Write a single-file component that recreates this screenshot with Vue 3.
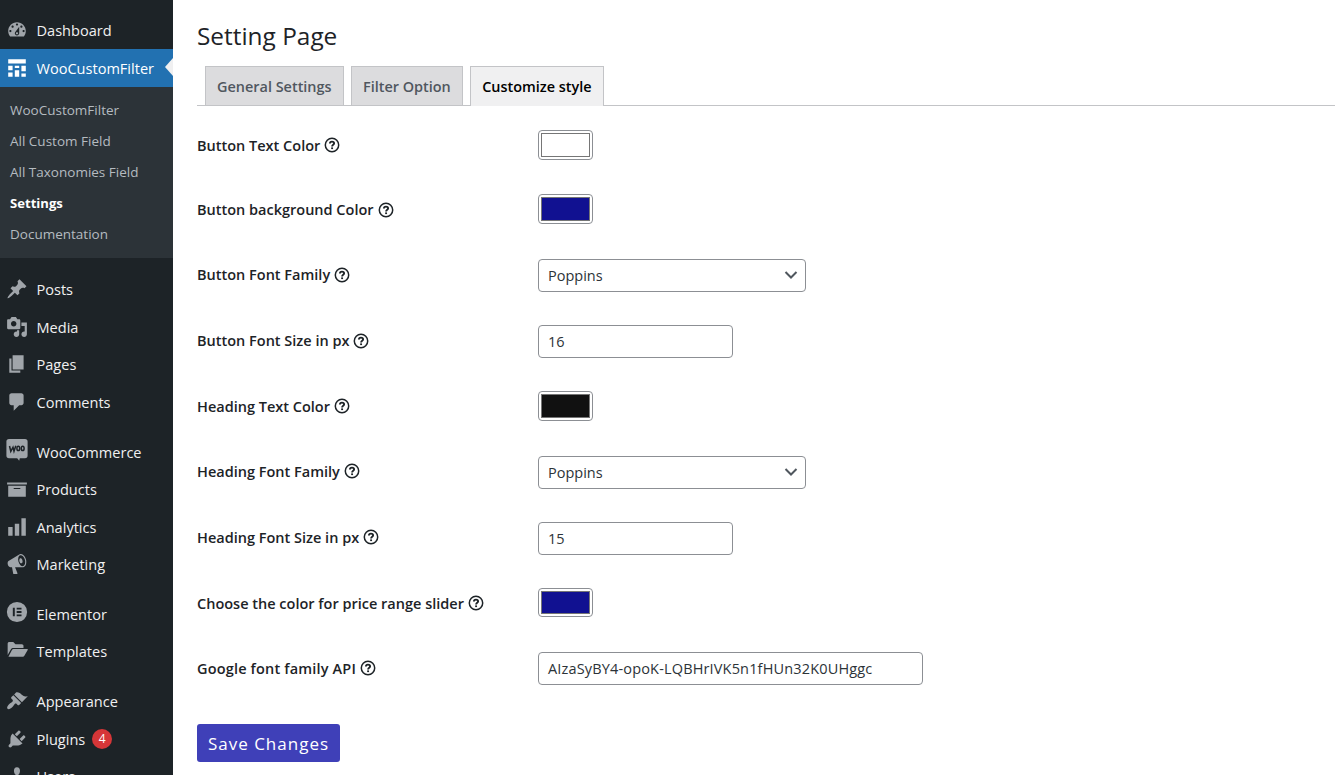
<script setup>
const icons = {
  dashboard: 'M3.76 16h12.48c1.1-1.37 1.76-3.11 1.76-5 0-4.42-3.58-8-8-8s-8 3.58-8 8c0 1.89.66 3.63 1.76 5zM10 4c.55 0 1 .45 1 1s-.45 1-1 1-1-.45-1-1 .45-1 1-1zM6 6c.55 0 1 .45 1 1s-.45 1-1 1-1-.45-1-1 .45-1 1-1zm8 0c.55 0 1 .45 1 1s-.45 1-1 1-1-.45-1-1 .45-1 1-1zm-5.37 5.55L12 7v6c0 1.1-.9 2-2 2s-2-.9-2-2c0-.57.24-1.08.63-1.45zM4 10c.55 0 1 .45 1 1s-.45 1-1 1-1-.45-1-1 .45-1 1-1zm12 0c.55 0 1 .45 1 1s-.45 1-1 1-1-.45-1-1 .45-1 1-1zm-5 3c0-.55-.45-1-1-1s-1 .45-1 1 .45 1 1 1 1-.45 1-1z',
  layout: 'M2 2h16v4H2V2zm0 10V8h4v4H2zm6-2V8h4v2H8zm6 3V8h4v5h-4zm-6 5v-6h4v6H8zm-6 0v-4h4v4H2zm12 0v-3h4v3h-4z',
  posts: 'M10.44 3.02l1.82-1.82 6.36 6.35-1.83 1.82c-1.05-.68-2.48-.57-3.41.36l-.75.75c-.92.93-1.04 2.35-.35 3.41l-1.83 1.82-2.41-2.41-2.8 2.79c-.42.42-3.38 2.71-3.8 2.29s1.86-3.39 2.28-3.81l2.79-2.79L4.1 9.36l1.83-1.82c1.05.69 2.48.57 3.4-.36l.75-.75c.93-.92 1.05-2.35.36-3.41z',
  media: 'M13 11V4c0-.55-.45-1-1-1h-1.67L9 1H5L3.67 3H2c-.55 0-1 .45-1 1v7c0 .55.45 1 1 1h10c.55 0 1-.45 1-1zM7 4.5c1.38 0 2.5 1.12 2.5 2.5S8.38 9.5 7 9.5 4.5 8.38 4.5 7 5.62 4.5 7 4.5zM14 6h5v10.5c0 1.38-1.12 2.5-2.5 2.5S14 17.88 14 16.5s1.12-2.5 2.5-2.5c.17 0 .34.02.5.05V9h-3V6zm-4 8.05V13h2v3.5c0 1.38-1.12 2.5-2.5 2.5S7 17.88 7 16.5 8.12 14 9.5 14c.17 0 .34.02.5.05z',
  pages: 'M6 15V2h10v13H6zm-1 1h8v2H3V5h2v11z',
  comments: 'M5 2h9c1.1 0 2 .9 2 2v7c0 1.1-.9 2-2 2h-2l-5 5v-5H5c-1.1 0-2-.9-2-2V4c0-1.1.9-2 2-2z',
  products: 'M19 4v2H1V4h18zM2 7h16v10H2V7zm11 3V9H7v1h6z',
  analytics: 'M18 18V2h-4v16h4zm-6 0V7H8v11h4zm-6 0v-8H2v8h4z',
  marketing: 'M18.15 5.94c.46 1.62.38 3.22-.02 4.48-.42 1.28-1.26 2.18-2.3 2.48-.16.06-.26.06-.4.06-.06.02-.12.02-.18.02-.06.02-.14.02-.22.02h-6.8l2.22 5.5c.02.14-.06.26-.14.34-.08.1-.24.16-.34.16H6.95c-.1 0-.26-.06-.34-.16-.08-.08-.16-.2-.14-.34l-1-5.5H4.25l-.02-.02c-.5.06-1.08-.18-1.54-.62s-.88-1.08-1.06-1.88c-.24-.8-.2-1.56-.02-2.2.18-.62.58-1.08 1.06-1.3l.02-.02 9-5.4c.1-.06.18-.1.24-.16.06-.04.14-.08.24-.12.16-.08.28-.12.5-.18 1.04-.3 2.24.1 3.22.98s1.84 2.24 2.26 3.86zm-2.58 5.98h-.02c.4-.1.74-.34 1.04-.7.58-.7.86-1.76.86-3.04 0-.64-.1-1.3-.28-1.98-.34-1.36-1.02-2.5-1.78-3.24s-1.68-1.1-2.46-.88c-.82.22-1.4.96-1.7 2-.32 1.04-.28 2.36.06 3.72.38 1.36 1 2.5 1.8 3.24.78.74 1.62 1.1 2.48.88zm-2.54-7.08c.22-.04.42-.02.62.04.38.16.76.48 1.02 1s.42 1.2.42 1.78c0 .3-.04.56-.12.8-.18.48-.44.84-.86.94-.34.1-.8-.06-1.14-.4s-.64-.86-.78-1.5c-.18-.62-.12-1.24.02-1.72s.48-.84.82-.94z',
  elementor: 'M10 .8a9.2 9.2 0 1 0 0 18.4A9.2 9.2 0 0 0 10 .8zM6.2 6.2H8v7.6H6.2zM9.7 6.2h4.4v1.5H9.7zM9.7 9.2h4.4v1.6H9.7zM9.7 12.3h4.4v1.5H9.7z',
  templates: 'M1.500 14.500V4.300C1.500 3.300 2.200 2.700 3 2.700h3.600l2 2h5.800c.9 0 1.500.7 1.500 1.500v1.900H6.600c-.9 0-1.700.5-2.100 1.200zM2.200 16.200 5.400 10c.3-.6.8-.9 1.400-.9h12.400c.5 0 .8.5.5.9l-3 5.300c-.3.6-.8.9-1.400.9z',
  appearance: 'M14.48 11.06L7.41 3.99l1.5-1.5c.5-.56 2.3-.47 3.51.32 1.21.8 1.43 1.28 2.91 2.1 1.18.64 2.45 1.26 4.45.85zm-.71.71L6.7 4.7 4.93 6.47c-.39.39-.39 1.02 0 1.41l1.06 1.06c.39.39.39 1.03 0 1.42-.6.6-1.43 1.11-2.21 1.69-.35.26-.7.53-1.01.84C1.43 14.23.4 16.08 1.4 17.07c.99 1 2.84-.03 4.18-1.36.31-.31.58-.66.85-1.02.57-.78 1.08-1.61 1.69-2.21.39-.39 1.02-.39 1.41 0l1.06 1.06c.39.39 1.02.39 1.41 0z',
  plugins: 'M13.11 4.36L9.87 7.6 8 5.73l3.24-3.24c.35-.34 1.05-.2 1.56.32.52.51.66 1.21.31 1.55zm-8 1.77l.91-1.12 9.01 9.01-1.19.84c-.71.71-2.63 1.16-3.82 1.16H6.14L4.9 17.26c-.59.59-1.54.59-2.12 0-.59-.58-.59-1.53 0-2.12l1.24-1.24v-3.88c0-1.13.4-3.19 1.09-3.89zm7.26 3.97l3.24-3.24c.34-.35 1.04-.21 1.55.31.52.51.66 1.21.31 1.55l-3.24 3.25z',
  users: 'M10 9.25c-2.27 0-2.73-3.44-2.73-3.44C7 4.02 7.82 2 9.97 2c2.16 0 2.98 2.02 2.71 3.81 0 0-.41 3.44-2.68 3.44zm0 2.57L12.72 10c2.39 0 4.52 2.33 4.52 4.53v2.49s-3.65 1.13-7.24 1.13c-3.65 0-7.24-1.13-7.24-1.13v-2.49c0-2.25 1.94-4.48 4.47-4.48z',
}

const menu = [
  { name: 'Dashboard', icon: 'dashboard' },
  {
    name: 'WooCustomFilter',
    icon: 'layout',
    children: ['WooCustomFilter', 'All Custom Field', 'All Taxonomies Field', 'Settings', 'Documentation'],
  },
  { name: 'Posts', icon: 'posts', gap: true },
  { name: 'Media', icon: 'media' },
  { name: 'Pages', icon: 'pages' },
  { name: 'Comments', icon: 'comments' },
  { name: 'WooCommerce', icon: 'woo', gap: true },
  { name: 'Products', icon: 'products' },
  { name: 'Analytics', icon: 'analytics' },
  { name: 'Marketing', icon: 'marketing' },
  { name: 'Elementor', icon: 'elementor', gap: true },
  { name: 'Templates', icon: 'templates' },
  { name: 'Appearance', icon: 'appearance', gap: true },
  { name: 'Plugins', icon: 'plugins', badge: 4 },
  { name: 'Users', icon: 'users' },
]
const raised = ['woo', 'elementor', 'templates']

const tabs = ['General Settings', 'Filter Option', 'Customize style']

const rows = [
  { label: 'Button Text Color', type: 'color', value: '#ffffff' },
  { label: 'Button background Color', type: 'color', value: '#111191' },
  { label: 'Button Font Family', type: 'select', value: 'Poppins' },
  { label: 'Button Font Size in px', type: 'text', value: '16' },
  { label: 'Heading Text Color', type: 'color', value: '#111111' },
  { label: 'Heading Font Family', type: 'select', value: 'Poppins' },
  { label: 'Heading Font Size in px', type: 'text', value: '15' },
  { label: 'Choose the color for price range slider', type: 'color', value: '#111191' },
  { label: 'Google font family API', type: 'wide', value: 'AIzaSyBY4-opoK-LQBHrIVK5n1fHUn32K0UHggc' },
]
</script>

<template>
  <div class="page">
    <nav class="sidebar">
      <template v-for="item in menu" :key="item.name">
        <div class="item" :class="{ gap: item.gap, current: item.children, raised: raised.includes(item.icon) }">
          <svg v-if="item.icon === 'woo'" class="icon" viewBox="0 0 22 22">
            <path d="M3 0h16a2.600 2.600 0 0 1 2.600 2.600v14a2.600 2.600 0 0 1-2.600 2.600h-5.200l-.6 2.600-2-2.600H3A2.600 2.600 0 0 1 .4 16.600v-14A2.600 2.600 0 0 1 3 0z" />
            <path class="ink" d="M3.500 7l1.300 5.300L7 8.200l1 4L9.800 6.800" />
            <ellipse class="ink" cx="12.300" cy="9.400" rx="1.400" ry="2.200" />
            <ellipse class="ink" cx="16.700" cy="9.400" rx="1.400" ry="2.200" />
          </svg>
          <svg v-else class="icon" viewBox="0 0 20 20">
            <path fill-rule="evenodd" :d="icons[item.icon]" />
          </svg>
          <span class="name">{{ item.name }}</span>
          <span v-if="item.badge" class="badge">{{ item.badge }}</span>
        </div>
        <div v-if="item.children" class="submenu">
          <a v-for="child in item.children" :key="child" :class="{ active: child === 'Settings' }">{{ child }}</a>
        </div>
      </template>
    </nav>

    <main class="content">
      <h1>Setting Page</h1>
      <div class="tabs">
        <a v-for="tab in tabs" :key="tab" class="tab" :class="{ active: tab === 'Customize style' }">{{ tab }}</a>
      </div>
      <div class="form">
        <div v-for="row in rows" :key="row.label" class="row" :class="{ short: row.type === 'color', last: row.type === 'wide' }">
          <div class="label">
            <span>{{ row.label }}</span>
            <svg class="help" viewBox="0 0 16 16">
              <circle cx="8" cy="8" r="6.700" />
              <path class="mark" d="M5.900 6.600c0-1.300.9-2 2.100-2s2.100.8 2.100 1.800c0 1.400-2 1.400-2 3" />
              <path class="mark" d="M8.100 10.400v1.700" />
            </svg>
          </div>
          <div class="field" :class="row.type">
            <span v-if="row.type === 'color'" class="swatch" :style="{ background: row.value }"></span>
            <span v-else>{{ row.value }}</span>
            <svg v-if="row.type === 'select'" class="chevron" viewBox="0 0 14 10">
              <path d="M1.500 2l5.500 5.500L12.500 2" />
            </svg>
          </div>
        </div>
      </div>
      <button class="save">Save Changes</button>
    </main>
  </div>
</template>

<style>
body {
  background: #fff;
  overflow: hidden;
}
</style>

<style scoped>
.page {
  display: flex;
  width: 1335px;
  height: 775px;
  overflow: hidden;
  font-family: "Open Sans", "Noto Sans", sans-serif;
  color: #1d2327;
}
.sidebar {
  width: 173px;
  flex: none;
  box-sizing: border-box;
  padding-top: 11.500px;
  background: #1d2327;
  overflow: hidden;
}
.item {
  position: relative;
  display: flex;
  align-items: center;
  height: 37.500px;
  padding-left: 6px;
  font-size: 14.550px;
  color: #f0f0f1;
  white-space: nowrap;
}
.item.gap {
  margin-top: 12.400px;
}
.item.current {
  background: #2271b1;
  color: #fff;
}
.item.current::after {
  content: "";
  position: absolute;
  right: 0;
  top: 9px;
  border: 9px solid transparent;
  border-left: 0;
  border-right: 8px solid #f0f0f1;
}
.icon {
  flex: none;
  width: 22px;
  height: 22px;
  margin-right: 8.500px;
  fill: #a0a5aa;
}
.raised .icon {
  margin-bottom: 3px;
}
.current .icon {
  fill: #fff;
}
.ink {
  fill: none;
  stroke: #1d2327;
  stroke-width: 1.500;
}
.badge {
  display: flex;
  align-items: center;
  justify-content: center;
  width: 20px;
  height: 20px;
  margin-left: 7px;
  border-radius: 50%;
  background: #d63638;
  color: #fff;
  font-size: 12px;
}
.submenu {
  height: 171.500px;
  box-sizing: border-box;
  padding: 8px 0 8px 10px;
  background: #2c3338;
}
.submenu a {
  display: block;
  height: 31px;
  line-height: 31px;
  font-size: 13.500px;
  color: #b5bbc0;
  white-space: nowrap;
}
.submenu a.active {
  color: #fff;
  font-size: 13.100px;
  font-weight: 700;
}
.content {
  flex: 1;
  padding-left: 24px;
}
h1 {
  height: 34px;
  margin: 19px 0 13px;
  font-size: 24.400px;
  line-height: 34px;
  font-weight: 400;
}
.tabs {
  display: flex;
  gap: 7.400px;
  height: 39px;
  padding-left: 8px;
  border-bottom: 1px solid #c3c4c7;
}
.tab {
  box-sizing: border-box;
  height: 39px;
  padding: 0 11px;
  border: 1px solid #c3c4c7;
  border-bottom: 0;
  background: #dcdcde;
  color: #50575e;
  font-size: 14.450px;
  line-height: 39px;
  font-weight: 600;
  white-space: nowrap;
}
.tab.active {
  height: 40px;
  background: #f0f0f1;
  color: #000;
}
.form {
  height: 618px;
  box-sizing: border-box;
  padding-top: 23.800px;
}
.row {
  display: flex;
  align-items: flex-start;
  height: 66px;
}
.row.short {
  height: 64.600px;
}
.label {
  display: flex;
  align-items: center;
  width: 341px;
  height: 31.600px;
  font-size: 14.500px;
  font-weight: 580;
  white-space: nowrap;
}
.short .label {
  height: 31px;
}
.last .label {
  height: 32.600px;
  letter-spacing: 0.17px;
}
.help {
  width: 16px;
  height: 16px;
  margin-left: 4px;
  fill: none;
  stroke: #1d2327;
  stroke-width: 1.500;
}
.mark {
  stroke-width: 1.900;
}
.field {
  box-sizing: border-box;
  display: flex;
  align-items: center;
  justify-content: space-between;
  height: 33px;
  padding: 0 9px;
  border: 1px solid #8c8f94;
  border-radius: 4px;
  font-size: 14.500px;
  color: #2c3338;
}
.field.color {
  width: 55px;
  height: 29.800px;
  padding: 2px;
}
.swatch {
  box-sizing: border-box;
  width: 100%;
  height: 100%;
  border: 1px solid #767676;
}
.field.select {
  width: 268px;
  padding-right: 7px;
}
.field.text {
  width: 195px;
}
.field.wide {
  width: 385px;
  padding-bottom: 1px;
  letter-spacing: 0.16px;
}
.chevron {
  width: 14px;
  height: 10px;
  fill: none;
  stroke: #50575e;
  stroke-width: 2;
}
.save {
  display: block;
  width: 143px;
  height: 38px;
  padding: 0;
  border: 0;
  border-radius: 3px;
  background: #3f40b8;
  color: #fff;
  font-family: inherit;
  font-size: 17px;
  letter-spacing: 1px;
  white-space: nowrap;
}
</style>
